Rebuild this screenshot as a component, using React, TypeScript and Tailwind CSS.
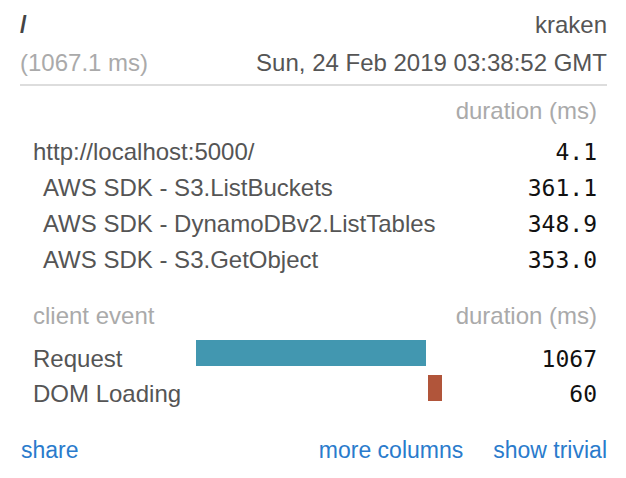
import React from 'react';

const sans = { fontFamily: '"Liberation Sans", Arial, sans-serif' };
const mono = { fontFamily: '"DejaVu Sans Mono", monospace' };

const timings = [
  { name: 'http://localhost:5000/', ms: '4.1', indent: false },
  { name: 'AWS SDK - S3.ListBuckets', ms: '361.1', indent: true },
  { name: 'AWS SDK - DynamoDBv2.ListTables', ms: '348.9', indent: true },
  { name: 'AWS SDK - S3.GetObject', ms: '353.0', indent: true },
];

const clientEvents = [
  { name: 'Request', start: 0, duration: 1067, color: 'bg-[#4297b0]' },
  { name: 'DOM Loading', start: 1067, duration: 60, color: 'bg-[#b1553a]' },
];

const SCALE = 230 / 1067;

export default function App() {
  return (
    <div className="w-[626px] h-[478px] bg-white text-[24px] text-[#555] overflow-hidden" style={sans}>
      <div className="pl-[20px] pr-[19px] pt-[6px]">
        {/* header */}
        <div className="flex items-center justify-between h-[38px]">
          <span className="font-bold text-[#444]">/</span>
          <span>kraken</span>
        </div>
        <div className="flex items-center justify-between h-[38px]">
          <span className="text-[#aaa]">(1067.1 ms)</span>
          <span>Sun, 24 Feb 2019 03:38:52 GMT</span>
        </div>
        <div className="h-[2px] bg-[#ddd] mt-[2px]" />

        {/* server timings */}
        <div className="pl-[13px] pr-[10px]">
          <div className="flex items-center justify-end h-[36px] mt-[7px] text-[#aaa]">duration (ms)</div>
          <div className="mt-[5px]">
            {timings.map((t) => (
              <div key={t.name} className="flex items-center justify-between h-[36px]">
                <span className={t.indent ? 'pl-[10px]' : ''}>{t.name}</span>
                <span className="text-[23px] text-[#111]" style={mono}>
                  {t.ms}
                </span>
              </div>
            ))}
          </div>

          {/* client timings */}
          <div className="flex items-center justify-between h-[36px] mt-[20px] text-[#aaa]">
            <span>client event</span>
            <span>duration (ms)</span>
          </div>
          <div className="mt-[6px]">
            {clientEvents.map((e) => (
              <div key={e.name} className="flex h-[35px]">
                <span className="w-[163px] shrink-0 pt-[2px] h-[35px] flex items-center">{e.name}</span>
                <div className="flex-1 relative">
                  <div
                    className={`absolute top-0 h-[26px] ${e.color}`}
                    style={{ left: Math.round(e.start * SCALE) + (e.start > 0 ? 2 : 0), width: Math.max(14, Math.round(e.duration * SCALE)) }}
                  />
                </div>
                <span className="w-[100px] text-[23px] text-[#111] pt-[4px] flex items-center justify-end" style={mono}>
                  {e.duration}
                </span>
              </div>
            ))}
          </div>
        </div>

        {/* footer */}
        <div className="flex items-center h-[36px] mt-[22px] text-[23px] text-[#2a7bcc]">
          <span className="pl-[1px]">share</span>
          <span className="ml-auto">more columns</span>
          <span className="ml-[30px]">show trivial</span>
        </div>
      </div>
    </div>
  );
}
